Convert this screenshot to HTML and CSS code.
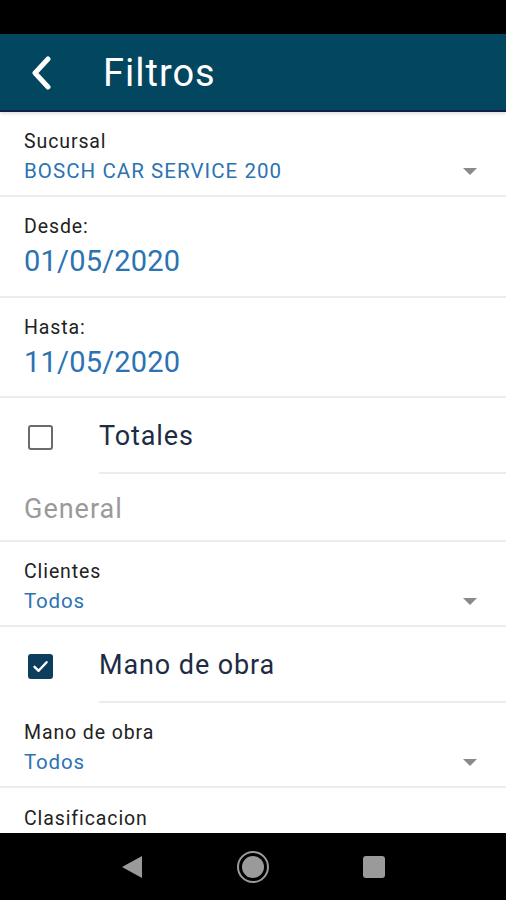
FILE: index.html
```html
<!DOCTYPE html>
<html lang="es">
<head>
<meta charset="utf-8">
<link rel="stylesheet" href="styles.css">
</head>
<body>
<div class="screen">
  <div class="status"></div>
  <header class="appbar">
    <svg class="back" width="24" height="34" viewBox="0 0 24 34"><path d="M19 3 L6 17 L19 31" fill="none" stroke="#fff" stroke-width="5" stroke-linecap="round" stroke-linejoin="round"/></svg>
    <h1 class="title">Filtros</h1>
  </header>
  <main class="content">
    <section class="field select">
      <div class="texts">
        <div class="label">Sucursal</div>
        <div class="value upper">BOSCH CAR SERVICE 200</div>
      </div>
      <span class="caret"></span>
    </section>
    <section class="field date">
      <div class="label">Desde:</div>
      <div class="value big">01/05/2020</div>
    </section>
    <section class="field date">
      <div class="label">Hasta:</div>
      <div class="value big">11/05/2020</div>
    </section>
    <section class="check-row">
      <span class="box"></span>
      <div class="check-text">Totales</div>
    </section>
    <section class="group-title">General</section>
    <section class="field select">
      <div class="texts">
        <div class="label">Clientes</div>
        <div class="value">Todos</div>
      </div>
      <span class="caret"></span>
    </section>
    <section class="check-row">
      <span class="box checked"><svg width="25" height="25" viewBox="0 0 25 25"><path d="M6.5 12.8 L10.6 16.8 L18.6 8.2" fill="none" stroke="#fff" stroke-width="2.4" stroke-linecap="round" stroke-linejoin="round"/></svg></span>
      <div class="check-text">Mano de obra</div>
    </section>
    <section class="field select">
      <div class="texts">
        <div class="label">Mano de obra</div>
        <div class="value">Todos</div>
      </div>
      <span class="caret"></span>
    </section>
    <section class="field last">
      <div class="label">Clasificacion</div>
    </section>
  </main>
  <nav class="navbar">
    <svg width="22" height="24" viewBox="0 0 22 24"><path d="M21 1 L21 23 L1 12 Z" fill="#9a9a9a"/></svg>
    <svg width="34" height="34" viewBox="0 0 34 34"><circle cx="17" cy="17" r="15" fill="none" stroke="#9a9a9a" stroke-width="2"/><circle cx="17" cy="17" r="11" fill="#9a9a9a"/></svg>
    <svg width="22" height="22" viewBox="0 0 22 22"><rect x="0" y="0" width="22" height="22" rx="3" fill="#9a9a9a"/></svg>
  </nav>
</div>
</body>
</html>
```
FILE: styles.css
```css
* { box-sizing: border-box; margin: 0; padding: 0; }
html, body { width: 506px; height: 900px; overflow: hidden; background: #fff; }
body { font-family: Roboto, "Noto Sans", sans-serif; }
.screen { display: flex; flex-direction: column; height: 900px; }
.status { height: 34px; background: #000; flex: none; }
.appbar {
  height: 78px; flex: none; background: #03465f;
  border-bottom: 2px solid #141d4a;
  display: flex; align-items: center; padding-left: 29px;
  box-shadow: 0 2px 3px rgba(0,0,0,0.12);
  position: relative; z-index: 1;
}
.back { margin-top: 2px; }
.title { font-weight: 400; font-size: 38px; color: #fff; margin-left: 50px; letter-spacing: 1px; margin-top: 2px; }
.content { flex: 1; overflow: hidden; }
.field { border-bottom: 2px solid #ececec; padding: 0 24px; }
.field.select { display: flex; align-items: center; justify-content: space-between; height: 85px; padding-top: 9px; }
.texts { display: flex; flex-direction: column; }
.label { font-size: 19.5px; line-height: 26px; color: #222; letter-spacing: 0.9px; }
.value { font-size: 20.5px; line-height: 32px; color: #2b73b2; letter-spacing: 0.8px; }
.value.upper { letter-spacing: 1.05px; }
.value.big { font-size: 29px; line-height: 42px; letter-spacing: 0.2px; }
.field.date { height: 101px; padding-top: 17px; }
.field.date + .field.date { height: 100px; }
.field.last { border-bottom: none; padding-top: 18px; }
.caret { width: 0; height: 0; border-left: 7px solid transparent; border-right: 7px solid transparent; border-top: 7px solid #8a8a8a; margin-right: 5px; align-self: flex-end; margin-bottom: 20px; }
.check-row { display: flex; align-items: center; height: 76px; padding-left: 28px; position: relative; }
.check-row::after { content: ""; position: absolute; left: 99px; right: 0; bottom: 0; height: 2px; background: #ececec; }
.box { width: 25px; height: 25px; border: 2.5px solid #6b6b6b; border-radius: 3px; flex: none; margin-top: 2px; }
.box.checked { border: none; background: #0d3d5d; }
.box svg { display: block; }
.check-text { margin-left: 46px; font-size: 27px; color: #1c2c45; letter-spacing: 0.9px; }
.group-title { height: 68px; display: flex; align-items: center; padding: 0 24px; padding-top: 4px; font-size: 27px; color: #9a9a9a; letter-spacing: 1px; border-bottom: 2px solid #ececec; }
.navbar { height: 67px; flex: none; background: #000; display: flex; align-items: center; justify-content: center; }
.navbar svg:nth-child(1) { margin-right: 93px; }
.navbar svg:nth-child(3) { margin-left: 93px; }
```
